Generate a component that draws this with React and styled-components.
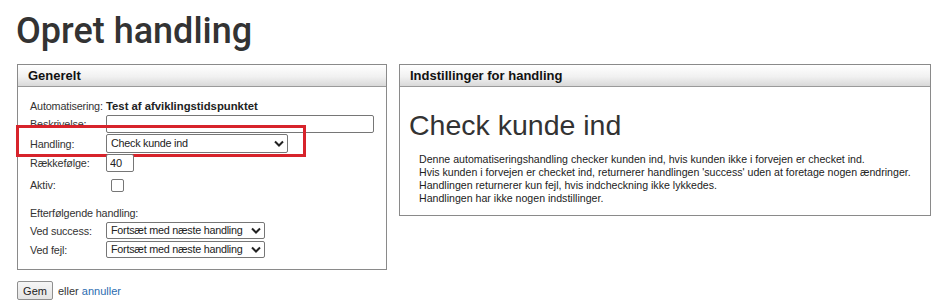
import styled, { createGlobalStyle } from "styled-components";

const GlobalStyle = createGlobalStyle`
  body {
    margin: 0;
    background: #ffffff;
    font-family: "Liberation Sans", Arial, sans-serif;
    color: #333;
  }
`;

const Page = styled.div`
  padding: 10px 16px 0 16px;
`;

const Title = styled.h1`
  margin: 0;
  font-family: Roboto, "Liberation Sans", sans-serif;
  font-weight: 500;
  font-size: 36px;
  line-height: 43px;
  color: #333;
`;

const Panels = styled.div`
  display: flex;
  align-items: flex-start;
  gap: 12px;
  margin-top: 11px;
  padding-left: 1px;
`;

const Panel = styled.div`
  width: ${(p) => p.width}px;
  box-sizing: border-box;
  border: 1px solid #8a8a8a;
  background: #fff;
`;

const PanelHeader = styled.div`
  height: 22px;
  box-sizing: border-box;
  border-bottom: 1px solid #9a9a9a;
  background: linear-gradient(#ffffff, #f1f1f1 55%, #d9d9d9);
  padding-left: 10px;
  font-size: 13px;
  font-weight: bold;
  line-height: 21px;
  color: #111;
`;

const FormBody = styled.div`
  display: flex;
  flex-direction: column;
  padding: 10px 12px 10px 12px;
  font-size: 10.8px;
`;

const Row = styled.div`
  display: flex;
  align-items: center;
  height: ${(p) => p.h || 18}px;
  margin-top: ${(p) => p.mt || 0}px;
  position: relative;
`;

const Label = styled.span`
  width: 76px;
  flex: none;
  white-space: nowrap;
  letter-spacing: -0.15px;
`;

const Strong = styled.span`
  font-weight: bold;
  font-size: 11.3px;
  color: #222;
`;

const TextInput = styled.input`
  box-sizing: border-box;
  width: ${(p) => p.width}px;
  height: 18px;
  border: 1px solid #767676;
  border-radius: 2px;
  padding: 0 3px;
  font-family: "Liberation Sans", Arial, sans-serif;
  font-size: 11px;
  color: #222;
  outline: none;
`;

const Checkbox = styled.span`
  display: inline-block;
  width: 13px;
  height: 13px;
  box-sizing: border-box;
  margin-left: 5px;
  border: 1px solid #767676;
  border-radius: 2px;
  background: #fff;
`;

const SelectBox = styled.div`
  position: relative;
  box-sizing: border-box;
  width: ${(p) => p.width}px;
  height: ${(p) => p.h}px;
  border: 1px solid #767676;
  border-radius: 2px;
  padding-left: 4px;
  font-size: 10.8px;
  letter-spacing: -0.25px;
  line-height: ${(p) => p.h - 2}px;
  color: #222;
  background: #fff;
  white-space: nowrap;
  overflow: hidden;
`;

const Chevron = styled.svg`
  position: absolute;
  right: 3px;
  top: 50%;
  width: 10px;
  height: 7px;
  margin-top: -4px;
`;

const Highlight = styled.div`
  position: absolute;
  left: -14px;
  top: -8px;
  width: 290px;
  height: 32px;
  box-sizing: border-box;
  border: 3.5px solid #d7232b;
  pointer-events: none;
`;

const InfoBody = styled.div`
  padding: 21px 10px 10px 9px;
`;

const BigTitle = styled.div`
  font-size: 28.5px;
  line-height: 34px;
  color: #333;
`;

const Description = styled.div`
  margin: 11px 0 0 10px;
  font-size: 10.6px;
  line-height: 13px;
  color: #222;
`;

const Actions = styled.div`
  display: flex;
  align-items: center;
  gap: 5px;
  margin-top: 11px;
  padding-left: 1px;
  font-size: 11px;
`;

const Button = styled.button`
  height: 19px;
  width: 36px;
  box-sizing: border-box;
  padding: 0;
  border: 1px solid #8f8f8f;
  border-radius: 2px;
  background: linear-gradient(#f6f6f6, #e4e4e4);
  font-family: "Liberation Sans", Arial, sans-serif;
  font-size: 11px;
  color: #222;
`;

const CancelLink = styled.a`
  color: #2b6cb0;
  text-decoration: none;
`;

function Select({ width, h = 17, value }) {
  return (
    <SelectBox width={width} h={h}>
      {value}
      <Chevron viewBox="0 0 10 7">
        <path d="M1 1.5 L5 5.5 L9 1.5" fill="none" stroke="#222" strokeWidth="2" />
      </Chevron>
    </SelectBox>
  );
}

export default function App() {
  return (
    <>
      <GlobalStyle />
      <Page>
        <Title>Opret handling</Title>
        <Panels>
          <Panel width={370}>
            <PanelHeader>Generelt</PanelHeader>
            <FormBody>
              <Row>
                <Label>Automatisering:</Label>
                <Strong>Test af afviklingstidspunktet</Strong>
              </Row>
              <Row>
                <Label>Beskrivelse:</Label>
                <TextInput width={268} defaultValue="" />
              </Row>
              <Row h={21}>
                <Label>Handling:</Label>
                <Select width={182} h={19} value="Check kunde ind" />
                <Highlight />
              </Row>
              <Row h={18}>
                <Label>Rækkefølge:</Label>
                <TextInput width={28} defaultValue="40" />
              </Row>
              <Row h={20} mt={3}>
                <Label>Aktiv:</Label>
                <Checkbox />
              </Row>
              <Row h={16} mt={10}>
                <Label>Efterfølgende handling:</Label>
              </Row>
              <Row h={19}>
                <Label>Ved success:</Label>
                <Select width={159} value="Fortsæt med næste handling" />
              </Row>
              <Row h={19}>
                <Label>Ved fejl:</Label>
                <Select width={159} value="Fortsæt med næste handling" />
              </Row>
            </FormBody>
          </Panel>
          <Panel width={537}>
            <PanelHeader>Indstillinger for handling</PanelHeader>
            <InfoBody>
              <BigTitle>Check kunde ind</BigTitle>
              <Description>
                Denne automatiseringshandling checker kunden ind, hvis kunden ikke i forvejen er checket ind.
                <br />
                Hvis kunden i forvejen er checket ind, returnerer handlingen 'success' uden at foretage nogen ændringer.
                <br />
                Handlingen returnerer kun fejl, hvis indcheckning ikke lykkedes.
                <br />
                Handlingen har ikke nogen indstillinger.
              </Description>
            </InfoBody>
          </Panel>
        </Panels>
        <Actions>
          <Button>Gem</Button>
          <span>
            eller <CancelLink href="#">annuller</CancelLink>
          </span>
        </Actions>
      </Page>
    </>
  );
}
